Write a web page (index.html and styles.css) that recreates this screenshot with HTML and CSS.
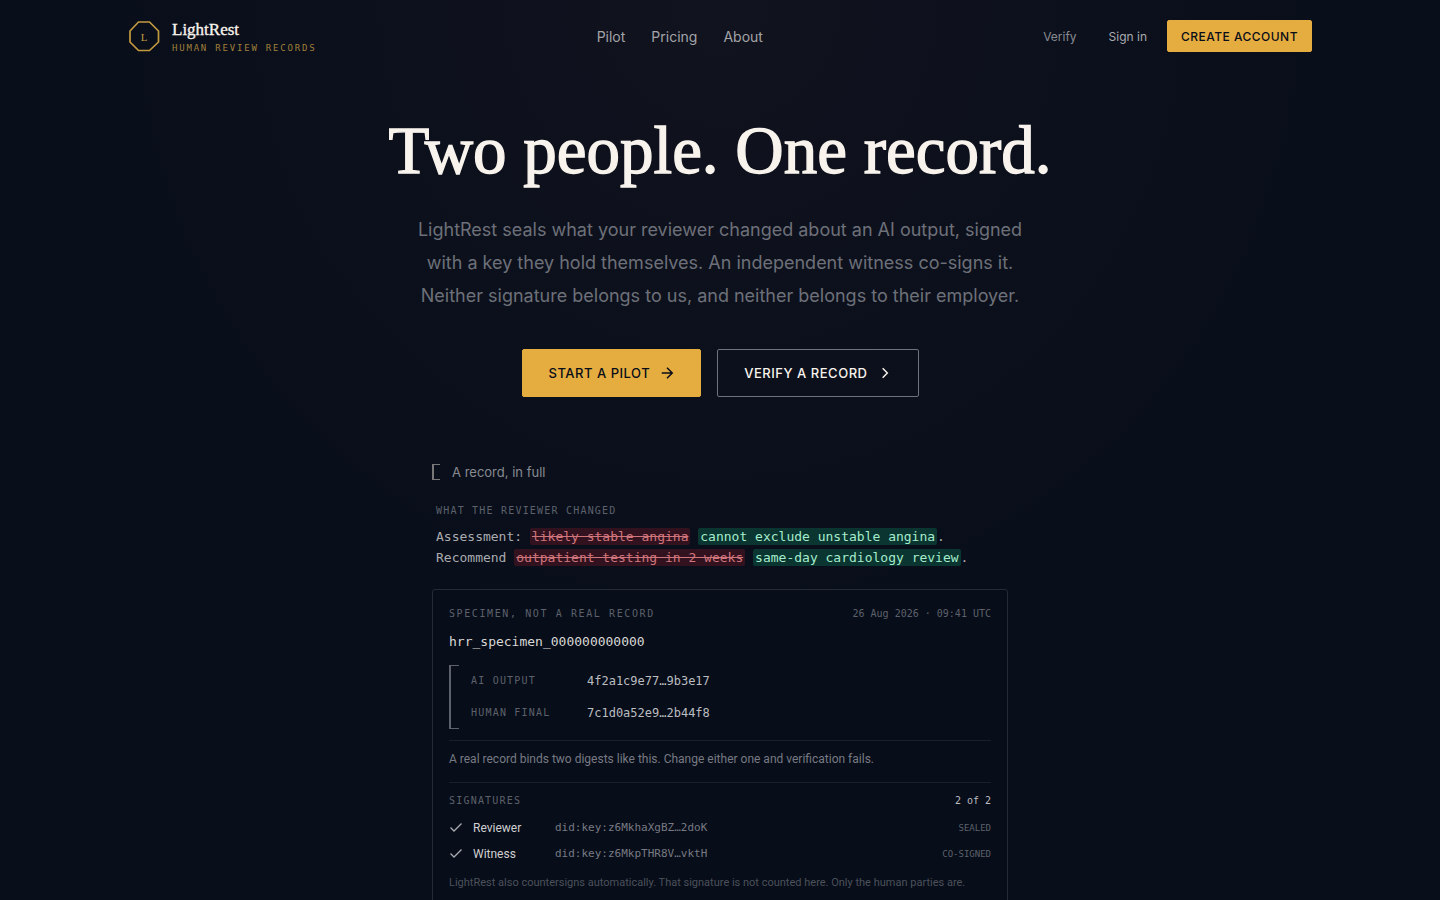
FILE: index.html
```html
<!DOCTYPE html>
<html lang="en">
<head>
  <meta charset="UTF-8" />
  <title>LightRest</title>
  <meta name="viewport" content="width=device-width, initial-scale=1" />
  <link rel="stylesheet" href="styles.css">
</head>
<body>
  <header class="site-header">
    <a class="brand" href="#">
      <svg class="brand-mark" viewBox="0 0 32 32" aria-hidden="true">
        <path d="M10.500 2h11l9 9v11l-9 8.500h-11L2 22V11z" fill="none" stroke="currentColor" stroke-width="1.700" />
        <text x="16" y="20.500" text-anchor="middle" fill="currentColor">L</text>
      </svg>
      <span class="brand-text">
        <span class="brand-name">LightRest</span>
        <span class="brand-tag">Human review records</span>
      </span>
    </a>
    <nav class="main-nav">
      <a href="#">Pilot</a>
      <a href="#">Pricing</a>
      <a href="#">About</a>
    </nav>
    <div class="account">
      <a class="verify" href="#">Verify</a>
      <a class="sign-in" href="#">Sign in</a>
      <button class="btn btn-small" type="button">Create account</button>
    </div>
  </header>

  <main>
    <section class="hero">
      <h1>Two people. One record.</h1>
      <p class="lead">LightRest seals what your reviewer changed about an AI output, signed with a key they hold themselves. An independent witness co-signs it. Neither signature belongs to us, and neither belongs to their employer.</p>
      <div class="actions">
        <button class="btn" type="button">Start a pilot
          <svg class="icon" viewBox="0 0 24 24" aria-hidden="true"><path d="M3 12h18M12 3l9 9-9 9" /></svg>
        </button>
        <button class="btn btn-outline" type="button">Verify a record
          <svg class="icon" viewBox="0 0 24 24" aria-hidden="true"><path d="M8 4l8 8-8 8" /></svg>
        </button>
      </div>
    </section>

    <section class="record">
      <h2 class="record-title"><span class="bracket"></span>A record, in full</h2>

      <div class="changes">
        <h3 class="label">What the reviewer changed</h3>
        <p>Assessment: <del>likely stable angina</del> <ins>cannot exclude unstable angina</ins>.</p>
        <p>Recommend <del>outpatient testing in 2 weeks</del> <ins>same-day cardiology review</ins>.</p>
      </div>

      <article class="card">
        <div class="row">
          <span class="label label-wide">Specimen, not a real record</span>
          <time class="date">26 Aug 2026 · 09:41 UTC</time>
        </div>
        <p class="record-id">hrr_specimen_000000000000</p>
        <dl class="digests">
          <dt class="label">AI output</dt>
          <dd>4f2a1c9e77…9b3e17</dd>
          <dt class="label">Human final</dt>
          <dd>7c1d0a52e9…2b44f8</dd>
        </dl>
        <p class="note">A real record binds two digests like this. Change either one and verification fails.</p>
        <div class="row signatures-head">
          <span class="label">Signatures</span>
          <span class="count">2 of 2</span>
        </div>
        <ul class="signatures">
          <li>
            <svg class="check" viewBox="0 0 14 14" aria-hidden="true"><path d="M1.500 6.500l3.500 3.500 7.500-7.500" /></svg>
            <span class="who">Reviewer</span>
            <span class="key">did:key:z6MkhaXgBZ…2doK</span>
            <span class="state">Sealed</span>
          </li>
          <li>
            <svg class="check" viewBox="0 0 14 14" aria-hidden="true"><path d="M1.500 6.500l3.500 3.500 7.500-7.500" /></svg>
            <span class="who">Witness</span>
            <span class="key">did:key:z6MkpTHR8V…vktH</span>
            <span class="state">Co-signed</span>
          </li>
        </ul>
        <p class="footnote">LightRest also countersigns automatically. That signature is not counted here. Only the human parties are.</p>
      </article>
    </section>
  </main>
</body>
</html>
```
FILE: styles.css
```css
:root {
  --gold: #e5ac3f;
  --sans: "Inter", sans-serif;
  --small: "Roboto", sans-serif;
  --mono: "DejaVu Sans Mono", "Liberation Mono", monospace;
  --serif: "Liberation Serif", serif;
}

*,
*::before {
  box-sizing: border-box;
}

body {
  margin: 0;
  min-height: 100vh;
  color: #f8f3ec;
  background: #080e1a radial-gradient(ellipse 620px 640px at 50% 0, #11131e, #080e1a) no-repeat;
  font-family: var(--sans);
}

h1, h2, h3, p, dl, dd, ul {
  margin: 0;
  padding: 0;
  font-weight: 400;
}

a {
  color: inherit;
  text-decoration: none;
}

.site-header {
  display: flex;
  justify-content: space-between;
  align-items: center;
  max-width: 1184px;
  height: 72px;
  margin: 0 auto;
}

.brand {
  display: flex;
  align-items: center;
  gap: 12px;
}

.brand-mark {
  width: 32px;
  height: 32px;
  color: #c49a3f;
  font: 11px var(--serif);
}

.brand-text {
  display: flex;
  flex-direction: column;
}

.brand-name {
  font: 17px/24px var(--serif);
  -webkit-text-stroke: 0.02em;
}

.brand-tag {
  color: #a07f3a;
  font: 9px/12px var(--mono);
  letter-spacing: 0.2em;
  text-transform: uppercase;
}

.main-nav {
  display: flex;
  gap: 26px;
  color: #a3a4a8;
  font-size: 14px;
}

.account {
  display: flex;
  align-items: center;
  font-size: 12px;
}

.verify {
  margin-right: 32px;
  color: #888a91;
}

.sign-in {
  margin-right: 20px;
  color: #a9abb0;
}

.btn {
  display: inline-flex;
  align-items: center;
  gap: 10px;
  height: 48px;
  padding: 0 26px;
  border: 1px solid var(--gold);
  border-radius: 2px;
  background: var(--gold);
  color: #080d19;
  font: 500 13px var(--sans);
  letter-spacing: 0.04em;
  text-transform: uppercase;
  cursor: pointer;
}

.btn-small {
  height: 32px;
  padding: 0 13px;
  font-size: 12px;
}

.btn-outline {
  border-color: #6f727b;
  background: transparent;
  color: #f8f3ec;
}

.icon {
  width: 14px;
  height: 14px;
  fill: none;
  stroke: currentColor;
  stroke-width: 2.500;
}

.hero {
  display: flex;
  flex-direction: column;
  align-items: center;
  padding-top: 40px;
  text-align: center;
}

h1 {
  font: 67px/76px var(--serif);
  -webkit-text-stroke: 0.02em;
}

.lead {
  max-width: 620px;
  margin-top: 25px;
  color: #6d7079;
  font-size: 18px;
  line-height: 33px;
}

.actions {
  display: flex;
  gap: 16px;
  margin-top: 37px;
}

.record {
  max-width: 576px;
  margin: 65px auto 0;
}

.record-title {
  display: flex;
  align-items: center;
  gap: 12px;
  color: #888a91;
  font-size: 13px;
  line-height: 20px;
}

.bracket {
  width: 8px;
  height: 16px;
  border: 1px solid #777;
  border-left-width: 2px;
  border-right: 0;
}

.label {
  color: #5d616b;
  font: 10px/14px var(--mono);
  letter-spacing: 0.12em;
  text-transform: uppercase;
}

.label-wide {
  letter-spacing: 0.16em;
}

.changes {
  margin-top: 22px;
  padding: 0 4px;
  color: #a9abb0;
  font: 13px/21px var(--mono);
}

.changes .label {
  margin-bottom: 8px;
}

.changes del,
.changes ins {
  padding: 1px 2px;
  border-radius: 2px;
  text-decoration: none;
}

.changes del {
  background: #33121f;
  color: #d0757c;
  text-decoration: line-through;
}

.changes ins {
  background: #0a3531;
  color: #a5edcb;
}

.card {
  margin-top: 21px;
  padding: 17px 16px;
  border: 1px solid #252a35;
  border-radius: 3px;
  background: #070d19;
}

.row {
  display: flex;
  justify-content: space-between;
  align-items: center;
}

.date {
  color: #5d616b;
  font: 10px/14px var(--mono);
}

.record-id {
  margin-top: 10px;
  color: #d9d8d6;
  font: 13px/22px var(--mono);
}

.digests {
  position: relative;
  display: grid;
  grid-template-columns: 116px 1fr;
  align-items: center;
  margin-top: 12px;
  padding-left: 22px;
}

.digests::before {
  content: "";
  position: absolute;
  inset: 0 auto 0 0;
  width: 10px;
  border: 1px solid #5d616b;
  border-left-width: 2px;
  border-right: 0;
}

.digests dd {
  color: #bcbdc0;
  font: 12px/32px var(--mono);
}

.note {
  margin-top: 11px;
  padding: 8px 0 13px;
  border: 1px solid #1a202b;
  border-width: 1px 0;
  color: #777a83;
  font: 12px/20px var(--small);
}

.signatures-head {
  margin-top: 11px;
}

.count {
  color: #bcbdc0;
  font: 10px/14px var(--mono);
}

.signatures {
  margin-top: 7px;
  list-style: none;
}

.signatures li {
  display: grid;
  grid-template-columns: 14px 72px 1fr auto;
  column-gap: 10px;
  align-items: center;
  height: 26px;
}

.check {
  width: 14px;
  height: 14px;
  fill: none;
  stroke: #a9abb0;
  stroke-width: 1.300;
}

.who {
  color: #d0d0d1;
  font: 12px/20px var(--small);
}

.key {
  color: #777a83;
  font: 11px/14px var(--mono);
}

.state {
  color: #5d616b;
  font: 9px/14px var(--mono);
  text-transform: uppercase;
}

.footnote {
  margin-top: 7px;
  color: #4c515b;
  font: 11px/18px var(--small);
}
```
